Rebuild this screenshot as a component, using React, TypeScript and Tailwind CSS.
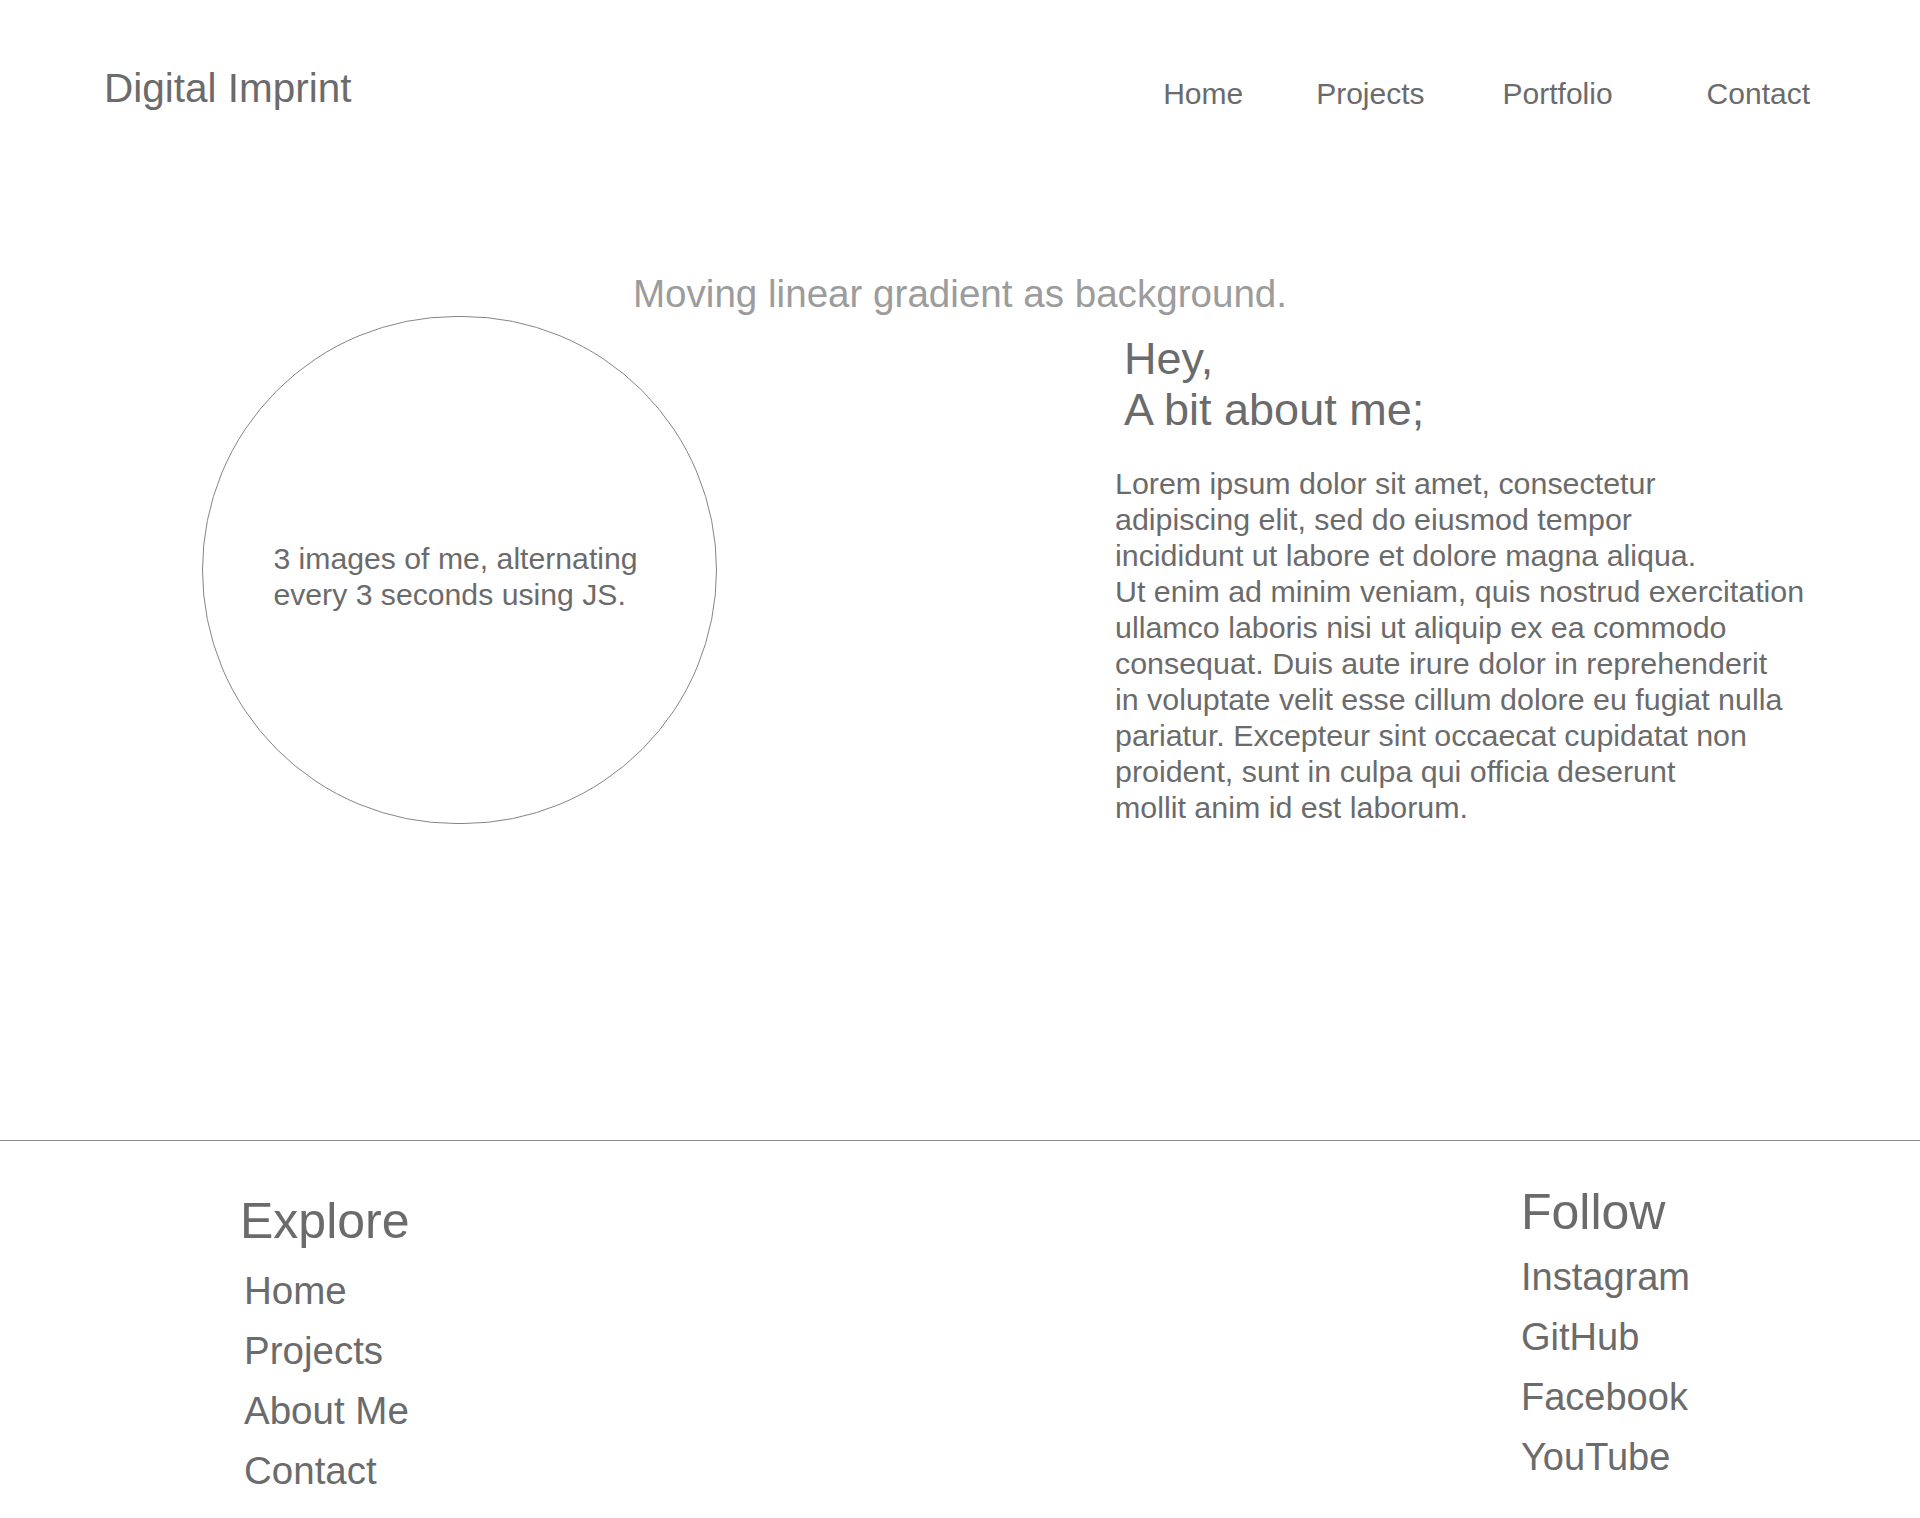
import React from 'react';

const navLinks = [
  { label: 'Home', gap: '' },
  { label: 'Projects', gap: 'ml-[73px]' },
  { label: 'Portfolio', gap: 'ml-[78px]' },
  { label: 'Contact', gap: 'ml-[94px]' },
];

const exploreLinks = ['Home', 'Projects', 'About Me', 'Contact'];
const followLinks = ['Instagram', 'GitHub', 'Facebook', 'YouTube'];

const aboutLines = [
  'Lorem ipsum dolor sit amet, consectetur',
  'adipiscing elit, sed do eiusmod tempor',
  'incididunt ut labore et dolore magna aliqua.',
  'Ut enim ad minim veniam, quis nostrud exercitation',
  'ullamco laboris nisi ut aliquip ex ea commodo',
  'consequat. Duis aute irure dolor in reprehenderit',
  'in voluptate velit esse cillum dolore eu fugiat nulla',
  'pariatur. Excepteur sint occaecat cupidatat non',
  'proident, sunt in culpa qui officia deserunt',
  'mollit anim id est laborum.',
];

export default function App() {
  return (
    <div className="min-h-[1518px] w-full bg-white font-['Liberation_Sans',Arial,sans-serif] text-[#6b6b6b]">
      {/* Header */}
      <header className="flex items-start justify-between pl-[104px] pr-[110px] pt-[64px]">
        <a className="text-[40.5px] leading-[48px]">Digital Imprint</a>
        <nav className="mt-[12px] flex text-[30px] leading-[36px]">
          {navLinks.map(link => (
            <a key={link.label} className={link.gap}>
              {link.label}
            </a>
          ))}
        </nav>
      </header>

      {/* Hero */}
      <p className="mt-[160px] text-center text-[38.6px] leading-[44px] text-[#9c9c9c]">
        Moving linear gradient as background.
      </p>

      <section className="flex items-start pl-[202px]">
        <div className="flex h-[508px] w-[515px] shrink-0 items-center justify-center rounded-full border border-[#858585]">
          <p className="mt-[14px] mr-[8px] text-[30.2px] leading-[36px]">
            3 images of me, alternating
            <br />
            every 3 seconds using JS.
          </p>
        </div>

        <div className="ml-[398px] mt-[17px]">
          <h1 className="pl-[9px] text-[45px] leading-[51px]">
            Hey,
            <br />
            A bit about me;
          </h1>
          <p className="mt-[30px] text-[30.4px] leading-[36px] whitespace-nowrap">
            {aboutLines.map((line, i) => (
              <React.Fragment key={i}>
                {line}
                {i < aboutLines.length - 1 && <br />}
              </React.Fragment>
            ))}
          </p>
        </div>
      </section>

      {/* Footer */}
      <footer className="mt-[315px] flex items-start border-t border-[#8a8a8a] pl-[240px]">
        <div className="w-[1281px] shrink-0 pt-[51px]">
          <h2 className="text-[50px] leading-[58px]">Explore</h2>
          <ul className="mt-[11px] pl-[4px] text-[38.5px] leading-[60px]">
            {exploreLinks.map(item => (
              <li key={item}>{item}</li>
            ))}
          </ul>
        </div>
        <div className="pt-[42px]">
          <h2 className="text-[50px] leading-[58px]">Follow</h2>
          <ul className="mt-[6px] text-[38px] leading-[60px]">
            {followLinks.map(item => (
              <li key={item}>{item}</li>
            ))}
          </ul>
        </div>
      </footer>
    </div>
  );
}
